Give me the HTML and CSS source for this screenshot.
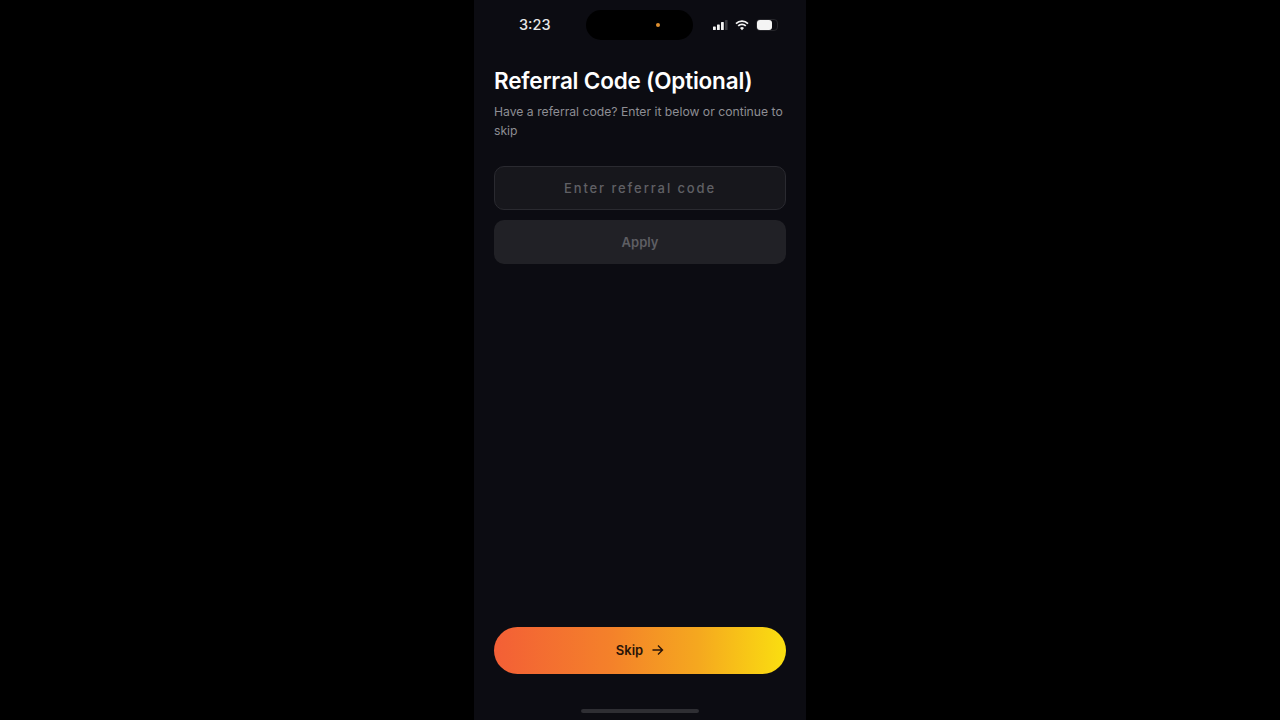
FILE: index.html
```html
<!DOCTYPE html>
<html lang="en">
<head>
<meta charset="UTF-8">
<meta name="viewport" content="width=device-width, initial-scale=1.0">
<title>Referral Code</title>
<link rel="stylesheet" href="styles.css">
</head>
<body>
<div class="phone">
    <div class="status-bar">
        <span class="time">3:23</span>
        <div class="island"><span class="dot"></span></div>
        <div class="status-icons">
            <svg class="signal" width="15" height="10" viewBox="0 0 15 10">
                <rect x="0" y="6.500" width="2.8" height="3.500" rx="0.6" fill="#f4f4f4"/>
                <rect x="4" y="4.500" width="2.8" height="5.500" rx="0.6" fill="#f4f4f4"/>
                <rect x="8" y="2" width="2.8" height="8" rx="0.6" fill="#f4f4f4"/>
                <rect x="12" y="0" width="2.6" height="10" rx="0.6" fill="#3a3a3f"/>
            </svg>
            <svg class="wifi" width="14" height="11" viewBox="0 0 14 11">
                <path d="M1 3.6a8.6 8.6 0 0 1 12 0M3.2 5.9a5.4 5.4 0 0 1 7.6 0" fill="none" stroke="#f4f4f4" stroke-width="1.7"/>
                <path d="M5 7.9a2.8 2.8 0 0 1 4 0L7 10.2z" fill="#f4f4f4"/>
            </svg>
            <div class="battery"><div class="battery-level"></div></div>
        </div>
    </div>

    <div class="content">
        <h1 class="title">Referral Code (Optional)</h1>
        <p class="subtitle">Have a referral code? Enter it below or continue to skip</p>
        <div class="code-input">Enter referral code</div>
        <button class="apply-button">Apply</button>
        <button class="skip-button">
            Skip
            <svg width="13" height="12" viewBox="0 0 13 12">
                <path d="M1.500 6h10M7 1.500 11.500 6 7 10.500" fill="none" stroke="#2a1408" stroke-width="1.400"/>
            </svg>
        </button>
    </div>

    <div class="home-indicator"></div>
</div>
</body>
</html>
```

FILE: styles.css
```css
body {
    font-family: Inter, 'Liberation Sans', sans-serif;
    background-color: #000000;
    display: flex;
    justify-content: center;
    height: 720px;
    margin: 0;
    overflow: hidden;
}

.phone {
    background-color: #0c0c12;
    width: 332px;
    height: 720px;
    display: flex;
    flex-direction: column;
}

.status-bar {
    height: 50px;
    padding: 10px 28px 0 45px;
    box-sizing: border-box;
    display: flex;
    align-items: flex-start;
    flex-shrink: 0;
}

.time {
    color: #e6e6e6;
    font-size: 14.5px;
    font-weight: 500;
    line-height: 30px;
    width: 67.500px;
}

.island {
    background-color: #000000;
    border-radius: 15px;
    width: 107px;
    height: 30px;
    display: flex;
    align-items: center;
    justify-content: flex-end;
    padding-right: 33px;
    box-sizing: border-box;
}

.dot {
    background-color: #e09030;
    border-radius: 50%;
    width: 4px;
    height: 4px;
}

.status-icons {
    display: flex;
    align-items: center;
    height: 30px;
    margin-left: 19.500px;
}

.wifi {
    margin-left: 7.500px;
}

.battery {
    border: 1px solid #26262b;
    border-radius: 4px;
    width: 20px;
    height: 10px;
    padding: 0;
    margin-left: 7px;
    display: flex;
}

.battery-level {
    background-color: #f4f4f4;
    border-radius: 3px;
    width: 15px;
    height: 100%;
}

.content {
    flex: 1;
    padding: 16px 20px 0;
    display: flex;
    flex-direction: column;
}

.title {
    color: #ffffff;
    font-size: 22.5px;
    font-weight: 600;
    line-height: 30px;
    letter-spacing: -0.2px;
    margin: 0 0 6px;
}

.subtitle {
    color: #8e8e94;
    font-size: 12.2px;
    line-height: 19px;
    margin: 0 0 26px;
}

.code-input {
    background-color: #17171c;
    border: 1px solid #2a2a30;
    border-radius: 10px;
    color: #606065;
    font-size: 13px;
    font-weight: 500;
    letter-spacing: 1.900px;
    height: 44px;
    line-height: 42px;
    box-sizing: border-box;
    text-align: center;
    margin-bottom: 10px;
}

.apply-button {
    background-color: #212126;
    border: none;
    border-radius: 10px;
    color: #5e5e63;
    font-family: inherit;
    font-size: 13px;
    font-weight: 600;
    height: 44px;
    padding: 0;
}

.skip-button {
    background: linear-gradient(90deg, #f35f36 0%, #f4812a 40%, #f5a81f 70%, #fadf10 100%);
    border: none;
    border-radius: 24px;
    color: #2a1408;
    font-family: inherit;
    font-size: 13px;
    font-weight: 600;
    height: 47px;
    padding: 0 0 1px;
    margin-top: auto;
    margin-bottom: 35px;
    display: flex;
    align-items: center;
    justify-content: center;
    gap: 8px;
}

.home-indicator {
    background-color: #2e2e33;
    border-radius: 2px;
    width: 118px;
    height: 4px;
    margin: 0 auto 7px;
    flex-shrink: 0;
}
```
